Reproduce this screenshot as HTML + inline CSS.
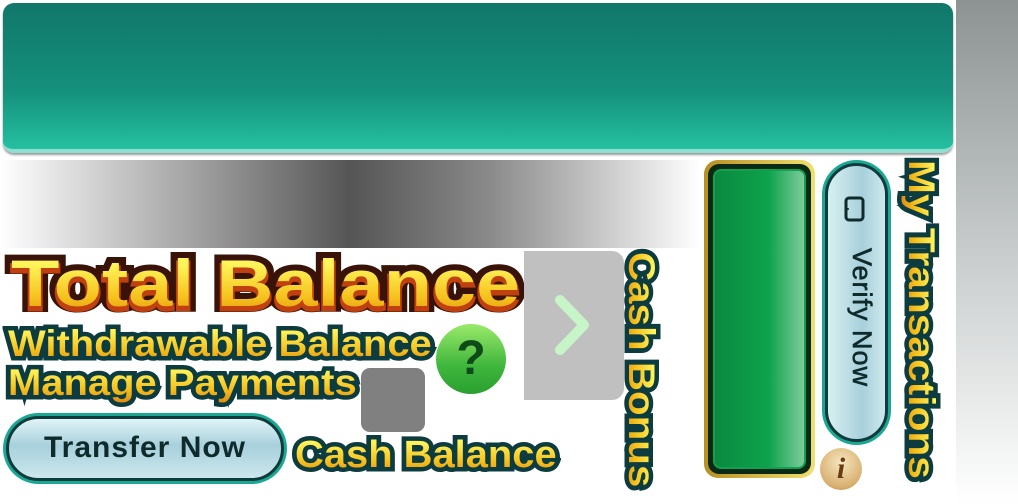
<!DOCTYPE html>
<html><head><meta charset="utf-8"><style>
*{margin:0;padding:0;box-sizing:border-box}
body{width:1018px;height:504px;background:#fff;position:relative;overflow:hidden;font-family:"Liberation Sans",sans-serif}
.a{position:absolute}
.t{position:absolute;font-weight:bold;white-space:nowrap;transform-origin:0 0}
.t .s{position:absolute;left:0;top:0;color:#0d3c40;-webkit-text-stroke:9px #0d3c40}
.t .f{position:relative;background:linear-gradient(#fff35a 20%,#f5c11d 65%,#e08a10);-webkit-background-clip:text;background-clip:text;color:transparent}
</style></head><body>
<div class="a" style="left:3px;top:3px;width:950px;height:150px;border-radius:11px;background:linear-gradient(#11776a,#15907c 60%,#25c0a0);border-bottom:4px solid #8fded0;box-shadow:0 2px 2px #999"></div>
<div class="a" style="left:956px;top:0;width:62px;height:504px;background:linear-gradient(#8d9393,#c8cccc 50%,#fff)"></div>
<div class="a" style="left:0;top:160px;width:700px;height:88px;background:linear-gradient(90deg,#fff,#9a9a9a 30%,#555 50%,#8a8a8a 70%,#fff)"></div>

<!-- Total Balance -->
<div class="t" style="left:11px;top:245px;font-size:66px;transform:scaleX(1.2)">
<span class="s" style="color:#3a1308;-webkit-text-stroke:12px #3a1308">Total Balance</span>
<span class="s" style="color:#c04010;-webkit-text-stroke:3px #c04010;top:4px">Total Balance</span>
<span class="f" style="background:linear-gradient(#fff55a 25%,#f5c11d 70%,#e09010);-webkit-background-clip:text">Total Balance</span></div>

<div class="t" style="left:8px;top:323px;font-size:37px;transform:scaleX(1.08)"><span class="s">Withdrawable Balance</span><span class="f">Withdrawable Balance</span></div>
<div class="t" style="left:8px;top:362px;font-size:37px;transform:scaleX(1.08)"><span class="s">Manage Payments</span><span class="f">Manage Payments</span></div>

<div class="a" style="left:436px;top:324px;width:70px;height:70px;border-radius:50%;background:linear-gradient(#9aea6a,#3fb63c 60%,#2aa030);color:#0e4a1a;font-size:48px;font-weight:bold;text-align:center;line-height:70px">?</div>
<div class="a" style="left:361px;top:368px;width:64px;height:64px;border-radius:9px;background:#808080"></div>

<div class="a" style="left:524px;top:251px;width:100px;height:149px;border-radius:0 12px 12px 0;background:#c0c0c0"></div>
<svg class="a" style="left:550px;top:290px" width="50" height="70"><path d="M10 10 L34 35 L10 60" fill="none" stroke="#c8f5c8" stroke-width="10" stroke-linecap="round" stroke-linejoin="round"/></svg>

<!-- Cash Bonus vertical -->
<div class="a" style="left:662px;top:252px;transform-origin:0 0;transform:rotate(90deg) scaleX(1.09)">
<div class="t" style="left:0;top:0;font-size:37px"><span class="s">Cash Bonus</span><span class="f">Cash Bonus</span></div></div>

<!-- Transfer Now -->
<div class="a" style="left:3px;top:413px;width:284px;height:71px;border-radius:36px;background:#1aa894;padding:3px"><div style="width:100%;height:100%;border-radius:33px;border:3px solid #0f3b3c;background:linear-gradient(#dff4f6,#a8d0dc 45%,#cce8ec);text-align:center;line-height:58px;font-size:30px;font-weight:bold;letter-spacing:1px;color:#0e2a2a">Transfer Now</div></div>

<div class="t" style="left:295px;top:434px;font-size:38px;transform:scaleX(1.05)"><span class="s">Cash Balance</span><span class="f">Cash Balance</span></div>

<!-- green frame -->
<div class="a" style="left:704px;top:160px;width:111px;height:318px;border-radius:14px;background:linear-gradient(90deg,#b89020,#f0e070);padding:4px"><div style="width:100%;height:100%;border-radius:11px;background:#0a2a16;padding:5px"><div style="width:100%;height:100%;border-radius:8px;background:linear-gradient(90deg,#0a8a40,#0ea24c 60%,#7ccc9c);border:2px solid #12a050"></div></div></div>

<!-- Verify pill -->
<div class="a" style="left:822px;top:160px;width:69px;height:285px;border-radius:35px;background:#1aa894;padding:3px"><div style="width:100%;height:100%;border-radius:32px;border:3px solid #0f3b3c;background:linear-gradient(90deg,#d8f0f0,#a8d0dc 60%,#cce8ec);position:relative">
<svg class="a" style="left:16px;top:30px" width="22" height="26"><rect x="2" y="2" width="17" height="22" rx="3" fill="none" stroke="#0e2a2a" stroke-width="3"/><circle cx="4" cy="13" r="1" fill="#0e2a2a"/></svg>
<div class="a" style="left:49px;top:82px;transform-origin:0 0;transform:rotate(90deg);font-size:27px;letter-spacing:1px;color:#0e2a2a;white-space:nowrap;-webkit-text-stroke:0.6px #0e2a2a">Verify Now</div></div></div>
<div class="a" style="left:820px;top:448px;width:42px;height:42px;border-radius:50%;background:radial-gradient(circle at 50% 35%,#f5e6c0,#d9b070 70%,#b08040);color:#6a3a10;font-family:'Liberation Serif',serif;font-style:italic;font-weight:bold;font-size:30px;text-align:center;line-height:42px">i</div>

<!-- My Transactions -->
<div class="a" style="left:942px;top:160px;transform-origin:0 0;transform:rotate(90deg) scaleX(1.1)">
<div class="t" style="left:0;top:0;font-size:37px"><span class="s">My Transactions</span><span class="f">My Transactions</span></div></div>
</body></html>
